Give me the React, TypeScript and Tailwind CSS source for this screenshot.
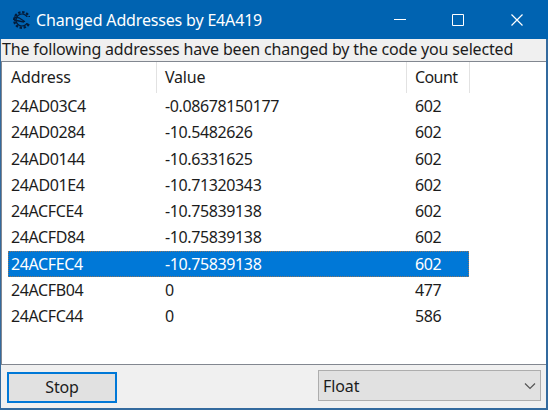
const rows = [
  ["24AD03C4", "-0.08678150177", "602"],
  ["24AD0284", "-10.5482626", "602"],
  ["24AD0144", "-10.6331625", "602"],
  ["24AD01E4", "-10.71320343", "602"],
  ["24ACFCE4", "-10.75839138", "602"],
  ["24ACFD84", "-10.75839138", "602"],
  ["24ACFEC4", "-10.75839138", "602"],
  ["24ACFB04", "0", "477"],
  ["24ACFC44", "0", "586"],
];

function AppIcon() {
  return (
    <svg width="20" height="20" viewBox="0 0 20 20" fill="none" stroke="#031c3a">
      <circle cx="11" cy="10" r="7.8" strokeWidth="2.4" strokeDasharray="2.4 1.7" pathLength="49" clipPath="url(#open)" />
      <circle cx="11" cy="10" r="6" strokeWidth="1.2" clipPath="url(#open)" />
      <path d="M3 7l5 .8 6 4M3 10l5 1 5 1.2" strokeWidth="1.3" />
      <clipPath id="open">
        <path d="M0 0h19v7h-5v6h5v7H0z" />
      </clipPath>
    </svg>
  );
}

function TitleBar() {
  return (
    <header className="flex h-[39px] shrink-0 items-center bg-[#0063b1] pl-[11px] text-white">
      <AppIcon />
      <h1 className="ml-[5px] w-[350px] text-[16px] leading-[20px] tracking-[-0.17px] whitespace-nowrap">
        Changed Addresses by E4A419
      </h1>
      <svg className="ml-[8px]" width="12" height="12" fill="none" stroke="currentColor">
        <path d="M0 5.5h12" />
      </svg>
      <svg className="ml-[46px]" width="12" height="12" fill="none" stroke="currentColor">
        <path d="M.5.5h11v11H.5z" />
      </svg>
      <svg className="ml-[47px]" width="12" height="12" fill="none" stroke="currentColor" strokeWidth="1.2">
        <path d="M.5.5l11 11M11.5.5l-11 11" />
      </svg>
    </header>
  );
}

export default function App() {
  return (
    <div className="flex h-[410px] w-[548px] flex-col bg-[#f0f0f0] font-['Noto_Sans','Noto_Sans_CJK_SC',sans-serif] text-[16px] text-[#1c1c1c]">
      <TitleBar />
      <main className="flex min-h-0 grow flex-col border-r-2 border-b-2 border-l border-[#336a9e]">
        <p className="h-[22px] shrink-0 pl-px leading-[21px] tracking-[-0.165px] whitespace-nowrap">
          The following addresses have been changed by the code you selected
        </p>
        <div className="h-[304px] shrink-0 border-y border-l border-[#828790] bg-white">
          <div className="flex h-[31px] leading-[31px] tracking-[-0.2px]">
            <div className="w-[155px] border-r border-[#e2e2e2] pl-[9px] tracking-[-0.1px]">Address</div>
            <div className="w-[250px] border-r border-[#e2e2e2] pl-[8px]">Value</div>
            <div className="w-[63px] border-r border-[#e2e2e2] pl-[8px] tracking-[-0.6px]">Count</div>
          </div>
          <div className="ml-[6px] grid w-[461px] auto-rows-[26.25px] leading-[25px] tracking-[-0.38px]">
            {rows.map(([address, value, count], i) => (
              <div
                key={address}
                className={
                  i === 6
                    ? "flex items-start border border-dotted border-[#8a7462] bg-[#0078d7] text-white"
                    : "flex items-start border border-transparent"
                }
              >
                <span className="w-[154px] pl-[2px]">{address}</span>
                <span className="w-[250px] pl-[2px]">{value}</span>
                <span className="pl-[2px]">{count}</span>
              </div>
            ))}
          </div>
        </div>
        <footer className="flex grow items-start justify-between pt-[5px] pr-[5px] pl-[6px]">
          <button className="mt-[2px] h-[31px] w-[110px] border-2 border-[#0078d7] bg-[#e1e1e1] pb-px leading-[26px] tracking-[-0.2px]">
            Stop
          </button>
          <div className="flex h-[31px] w-[223px] items-center justify-between border border-[#adadad] bg-[#e1e1e1] pr-[4px] pl-[4px]">
            <span className="tracking-[-0.1px]">Float</span>
            <svg width="12" height="8" fill="none" stroke="#555" strokeWidth="1.2">
              <path d="M1 1.5l5 5 5-5" />
            </svg>
          </div>
        </footer>
      </main>
    </div>
  );
}
